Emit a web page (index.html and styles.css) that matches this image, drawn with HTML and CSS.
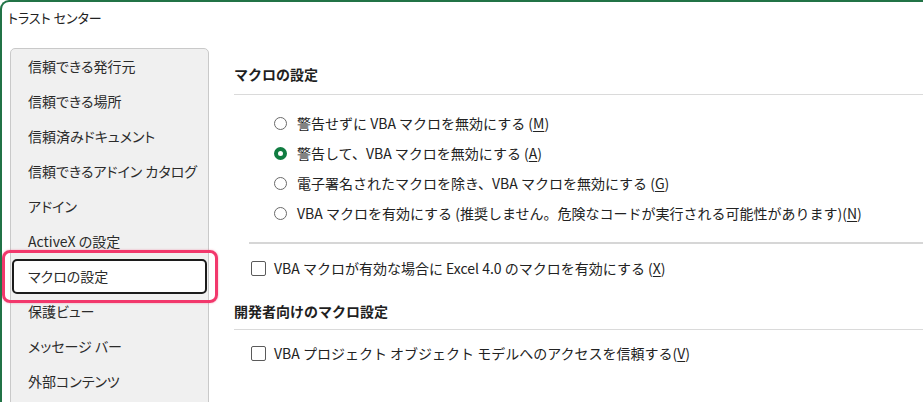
FILE: index.html
```html
<!DOCTYPE html>
<html lang="ja">
<head>
<meta charset="utf-8">
<title>トラスト センター</title>
<link rel="stylesheet" href="styles.css">
</head>
<body>
<div class="window">
  <div class="titlebar">トラスト センター</div>
  <div class="main">
    <nav class="nav">
      <div class="nav-item">信頼できる発行元</div>
      <div class="nav-item">信頼できる場所</div>
      <div class="nav-item">信頼済みドキュメント</div>
      <div class="nav-item">信頼できるアドイン カタログ</div>
      <div class="nav-item">アドイン</div>
      <div class="nav-item">ActiveX の設定</div>
      <div class="nav-item selected">マクロの設定<span class="highlight"></span></div>
      <div class="nav-item">保護ビュー</div>
      <div class="nav-item">メッセージ バー</div>
      <div class="nav-item">外部コンテンツ</div>
    </nav>
    <section class="content">
      <h2 class="heading">マクロの設定</h2>
      <div class="rule"></div>
      <div class="radios">
        <div class="row"><span class="radio"></span><span>警告せずに VBA マクロを無効にする (<u>M</u>)</span></div>
        <div class="row"><span class="radio checked"></span><span>警告して、VBA マクロを無効にする (<u>A</u>)</span></div>
        <div class="row"><span class="radio"></span><span>電子署名されたマクロを除き、VBA マクロを無効にする (<u>G</u>)</span></div>
        <div class="row"><span class="radio"></span><span>VBA マクロを有効にする (推奨しません。危険なコードが実行される可能性があります)(<u>N</u>)</span></div>
      </div>
      <div class="sep"></div>
      <div class="row check-row first"><span class="checkbox"></span><span>VBA マクロが有効な場合に Excel 4.0 のマクロを有効にする (<u>X</u>)</span></div>
      <h2 class="heading h2b">開発者向けのマクロ設定</h2>
      <div class="rule rule2"></div>
      <div class="row check-row second"><span class="checkbox"></span><span>VBA プロジェクト オブジェクト モデルへのアクセスを信頼する(<u>V</u>)</span></div>
    </section>
  </div>
</div>
</body>
</html>
```
FILE: styles.css
```css
html, body {
  margin: 0;
  padding: 0;
  background: #ffffff;
}
body {
  width: 923px;
  height: 402px;
  overflow: hidden;
  font-family: "Noto Sans CJK JP", "Noto Sans", sans-serif;
  color: #262626;
}
.window {
  box-sizing: border-box;
  width: 923px;
  height: 402px;
  overflow: hidden;
  border-top: 2px solid #217346;
  border-left: 2px solid #217346;
  border-top-left-radius: 9px;
  background: #fff;
}
.titlebar {
  height: 46px;
  box-sizing: border-box;
  padding: 6px 0 0 6px;
  font-size: 13px;
  line-height: 20px;
  color: #222;
  font-feature-settings: "palt";
}
.main {
  display: flex;
  align-items: flex-start;
}
.nav {
  position: relative;
  width: 197px;
  margin-left: 8px;
  padding: 0 0 20px;
  background: #f0f0f0;
  border: 1px solid #c9c9c9;
  border-radius: 5px 5px 0 0;
  font-feature-settings: "palt";
}
.nav-item {
  position: relative;
  height: 35px;
  line-height: 35px;
  padding-left: 17px;
  font-size: 14px;
  color: #2b2b2b;
}
.nav-item.selected {
  box-sizing: border-box;
  margin: 0 1px;
  padding-left: 14px;
  line-height: 31px;
  background: #fff;
  border: 2px solid #1c1c1c;
  border-radius: 5px;
}
.highlight {
  position: absolute;
  left: -12px;
  top: -11px;
  right: -13px;
  bottom: -11px;
  border: 3px solid #f2386c;
  border-radius: 8px;
  box-shadow: 0 0 2px rgba(242, 56, 108, 0.5);
  pointer-events: none;
}
.content {
  flex: 1;
  margin-left: 25px;
  padding-top: 16px;
  font-size: 14px;
  color: #222;
}
.heading {
  margin: 0;
  font-size: 14px;
  font-weight: 700;
  line-height: 20px;
  color: #1f1f1f;
}
.rule {
  margin-top: 10px;
  height: 1px;
  background: #dadada;
}
.radios {
  margin-top: 13px;
  padding-left: 40px;
}
.row {
  display: flex;
  align-items: center;
  height: 30px;
  white-space: nowrap;
}
.radio {
  box-sizing: border-box;
  flex: none;
  width: 13px;
  height: 13px;
  margin-right: 10px;
  border: 1px solid #6a6a6a;
  border-radius: 50%;
  background: #fff;
}
.radio.checked {
  border: 4px solid #107c41;
}
.sep {
  margin-top: 14px;
  margin-left: 15px;
  height: 2px;
  background: #d6d6d6;
}
.check-row {
  padding-left: 17px;
}
.check-row.first {
  margin-top: 9px;
}
.check-row.second {
  margin-top: 8px;
}
.checkbox {
  box-sizing: border-box;
  flex: none;
  width: 15px;
  height: 15px;
  margin-right: 8px;
  border: 1.5px solid #5a5a5a;
  border-radius: 2px;
  background: #fff;
}
.h2b {
  margin-top: 18px;
}
.rule2 {
  margin-top: 8px;
}
u {
  text-underline-offset: 2px;
}
```
